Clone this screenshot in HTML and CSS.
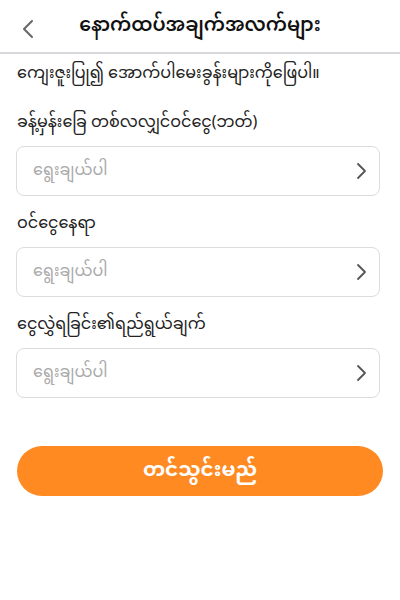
FILE: index.html
```html
<!DOCTYPE html>
<html lang="my">
<head>
    <meta charset="UTF-8">
    <meta name="viewport" content="width=device-width, initial-scale=1.0">
    <title>နောက်ထပ်အချက်အလက်များ</title>
    <link rel="stylesheet" href="styles.css">
</head>
<body>
    <div class="header">
        <span class="back">
            <svg width="14" height="20" viewBox="0 0 14 20"><path d="M11 2 L3 10 L11 18" fill="none" stroke="#666" stroke-width="2" stroke-linecap="round" stroke-linejoin="round"/></svg>
        </span>
        <h1 class="title">နောက်ထပ်အချက်အလက်များ</h1>
    </div>

    <div class="content">
        <p class="intro">ကျေးဇူးပြု၍ အောက်ပါမေးခွန်းများကိုဖြေပါ။</p>

        <label class="label">ခန့်မှန်းခြေ တစ်လလျှင်ဝင်ငွေ(ဘတ်)</label>
        <div class="select">
            <span class="placeholder">ရွေးချယ်ပါ</span>
            <svg width="12" height="18" viewBox="0 0 12 18"><path d="M3 2 L10 9 L3 16" fill="none" stroke="#555" stroke-width="1.8" stroke-linecap="round" stroke-linejoin="round"/></svg>
        </div>

        <label class="label">ဝင်ငွေနေရာ</label>
        <div class="select">
            <span class="placeholder">ရွေးချယ်ပါ</span>
            <svg width="12" height="18" viewBox="0 0 12 18"><path d="M3 2 L10 9 L3 16" fill="none" stroke="#555" stroke-width="1.8" stroke-linecap="round" stroke-linejoin="round"/></svg>
        </div>

        <label class="label">ငွေလွှဲရခြင်း၏ရည်ရွယ်ချက်</label>
        <div class="select">
            <span class="placeholder">ရွေးချယ်ပါ</span>
            <svg width="12" height="18" viewBox="0 0 12 18"><path d="M3 2 L10 9 L3 16" fill="none" stroke="#555" stroke-width="1.8" stroke-linecap="round" stroke-linejoin="round"/></svg>
        </div>

        <button class="submit">တင်သွင်းမည်</button>
    </div>
</body>
</html>
```

FILE: styles.css
```css
body {
    margin: 0;
    background: #fff;
    font-family: "Noto Sans Myanmar", "Padauk", "Myanmar Text", "Noto Sans", sans-serif;
    color: #222;
}
.header {
    height: 52px;
    display: flex;
    align-items: center;
    justify-content: center;
    position: relative;
    border-bottom: 2px solid #d8d8dc;
}
.back {
    position: absolute;
    left: 21px;
    top: 18px;
}
.title {
    margin: 0;
    font-size: 19px;
    font-weight: 600;
    color: #111;
}
.content {
    padding: 0 17px;
}
.intro {
    margin: 8px 0 0;
    font-size: 16px;
    line-height: 26px;
}
.label {
    display: block;
    font-size: 16px;
    line-height: 26px;
    margin-top: 16px;
}
.intro + .label {
    margin-top: 23px;
}
.select {
    box-sizing: border-box;
    height: 50px;
    margin: 9px 3px 0 -1px;
    border: 1.5px solid #dcdcdc;
    border-radius: 8px;
    display: flex;
    align-items: center;
    justify-content: space-between;
    padding: 0 12px 0 16px;
}
.placeholder {
    color: #aaa;
    font-size: 16px;
}
.submit {
    margin-top: 48px;
    width: 100%;
    height: 50px;
    border: none;
    border-radius: 25px;
    background: #ff8a22;
    color: #fff;
    font-family: inherit;
    font-size: 20px;
    font-weight: bold;
}
```
